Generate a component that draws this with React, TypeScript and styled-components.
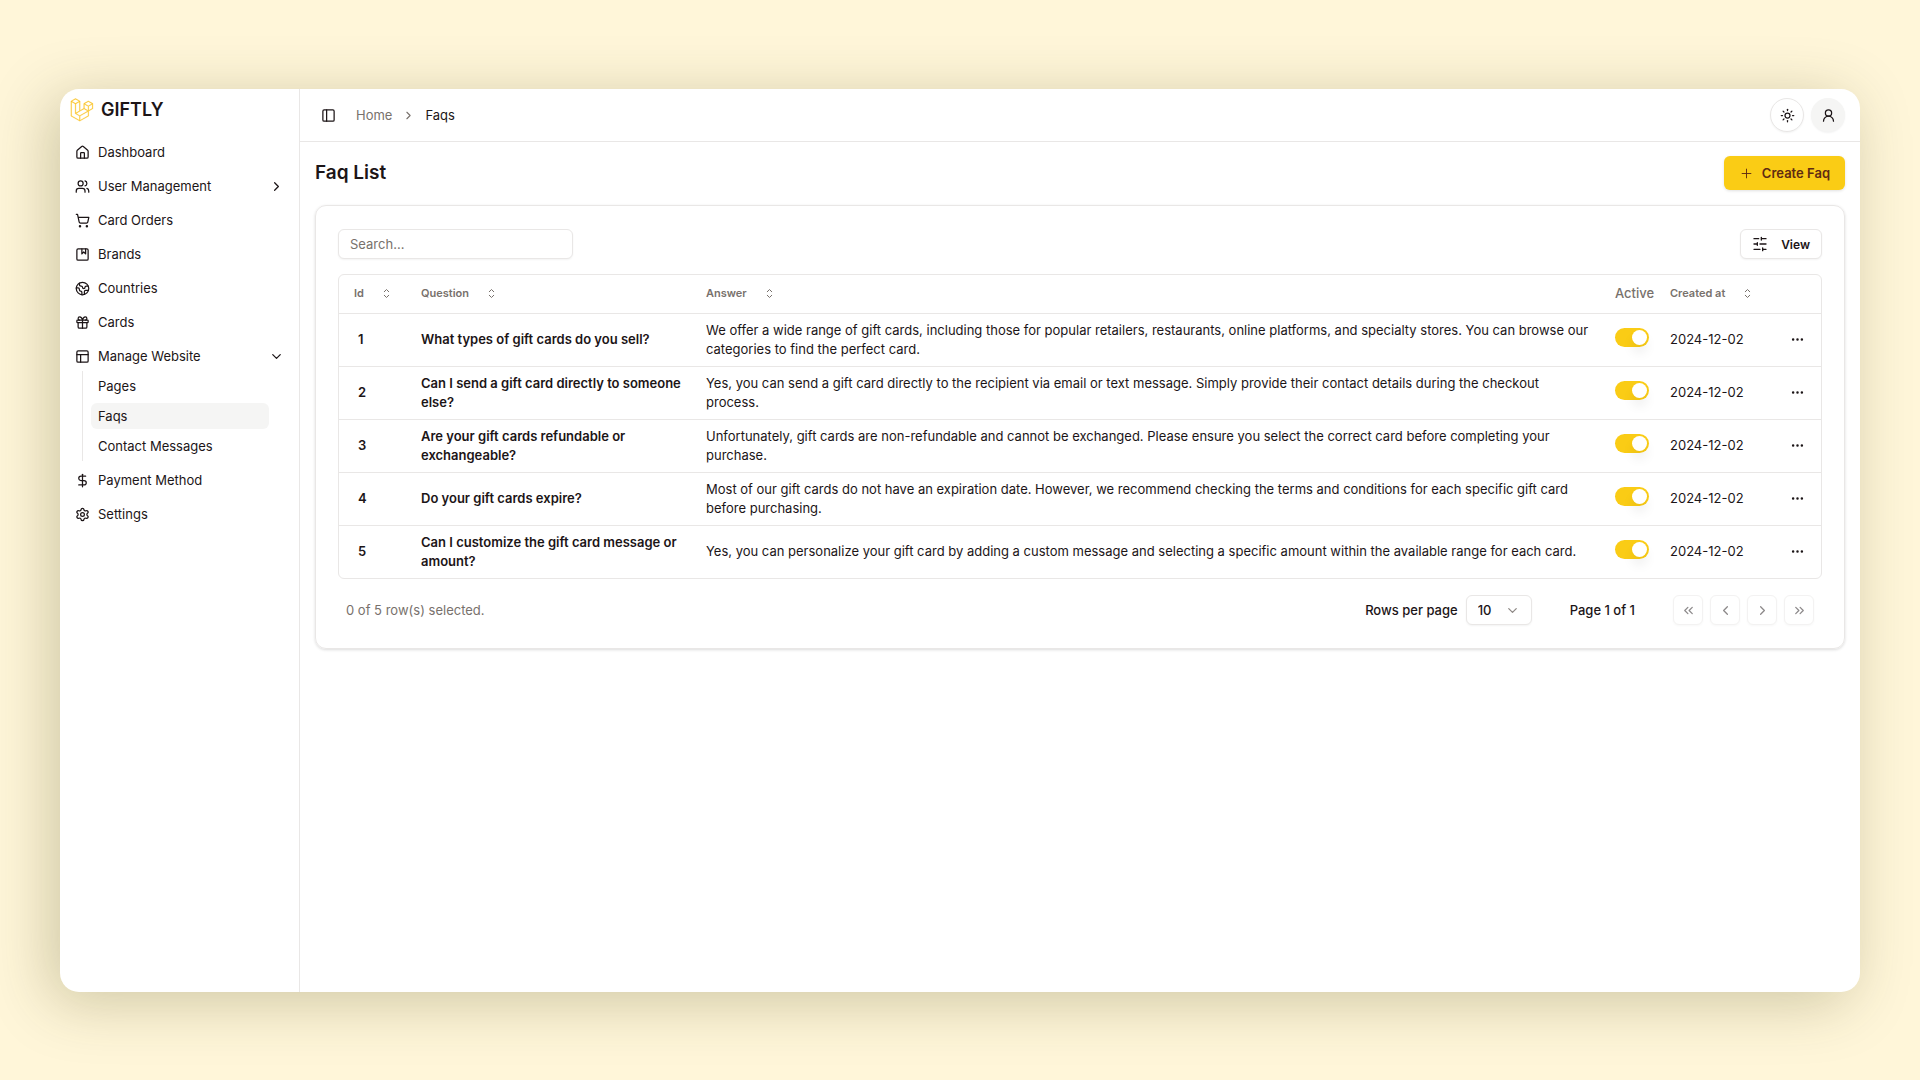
import React from "react";
import styled, { createGlobalStyle, css } from "styled-components";
import {
  Album,
  ChevronDown,
  ChevronLeft,
  ChevronRight,
  ChevronsLeft,
  ChevronsRight,
  DollarSign,
  Earth,
  Ellipsis,
  Gift,
  House,
  PanelLeft,
  PanelsTopLeft,
  Plus,
  Settings,
  ShoppingCart,
  Sun,
  UserRound,
  Users,
} from "lucide-react";

const ink = "#1c1517";
const muted = "#78716c";
const line = "#e9e7e6";
const yellow = "#facc15";

const GlobalStyle = createGlobalStyle`
  *, *::before, *::after { box-sizing: border-box; }
  body {
    margin: 0;
    background: #fff6d9;
    color: ${ink};
    font-family: Inter, "Liberation Sans", sans-serif;
    font-size: 13px;
    line-height: 19px;
  }
  button, input, select { font: inherit; color: inherit; }
  button { cursor: pointer; padding: 0; }
  a { color: inherit; text-decoration: none; }
  svg { flex: none; }
`;

const Stage = styled.div`
  display: flex;
  min-height: 100vh;
  padding: 89px 60px 88px;
`;

const Window = styled.div`
  display: flex;
  flex: 1;
  min-width: 0;
  background: #fff;
  border-radius: 19px;
  box-shadow: -10px 10px 60px rgba(59, 61, 7, 0.25);
`;

const Sidebar = styled.aside`
  flex: none;
  width: 240px;
  border-right: 1px solid ${line};
`;

const Brand = styled.a`
  display: flex;
  align-items: center;
  gap: 7px;
  height: 41px;
  padding-left: 10px;
  font-size: 18px;
  font-weight: 600;
`;

const Nav = styled.nav`
  padding: 7px 8px;
`;

const NavList = styled.ul`
  display: flex;
  flex-direction: column;
  gap: 4px;
  margin: 0;
  padding: 0;
  list-style: none;
`;

const itemStyle = css`
  display: flex;
  align-items: center;
  gap: 8px;
  width: 100%;
  height: 30px;
  padding: 0 7px;
  border: 0;
  border-radius: 6px;
  background: none;
  text-align: left;
`;

const NavLink = styled.a`
  ${itemStyle}
`;

const NavButton = styled.button`
  ${itemStyle}
  & > span { flex: 1; }
`;

const SubList = styled.ul`
  display: flex;
  flex-direction: column;
  gap: 4px;
  margin: 0 22px 0 14px;
  padding: 2px 0 2px 8px;
  border-left: 1px solid ${line};
  list-style: none;
`;

const SubLink = styled.a<{ $active?: boolean }>`
  display: flex;
  align-items: center;
  height: 26px;
  padding: 0 7px;
  border-radius: 6px;
  background: ${(p) => (p.$active ? "#f5f5f4" : "transparent")};
`;

const Main = styled.main`
  flex: 1;
  min-width: 0;
`;

const TopBar = styled.header`
  display: flex;
  align-items: center;
  justify-content: space-between;
  height: 53px;
  padding: 0 15px;
  border-bottom: 1px solid ${line};
`;

const Group = styled.div<{ $gap: number }>`
  display: flex;
  align-items: center;
  gap: ${(p) => p.$gap}px;
`;

const IconButton = styled.button`
  display: grid;
  place-items: center;
  width: 26px;
  height: 26px;
  border: 0;
  border-radius: 6px;
  background: none;
`;

const RoundButton = styled.button<{ $filled?: boolean }>`
  display: grid;
  place-items: center;
  width: 34px;
  height: 34px;
  border: 1px solid ${(p) => (p.$filled ? "#f5f5f4" : line)};
  border-radius: 50%;
  background: ${(p) => (p.$filled ? "#f5f5f4" : "#fff")};
  box-shadow: 0 1px 2px rgba(0, 0, 0, 0.05);
`;

const Crumbs = styled.nav`
  display: flex;
  align-items: center;
  gap: 10px;
  color: ${muted};
  & > span { color: ${ink}; }
`;

const Content = styled.div`
  padding: 14px 15px;
`;

const TitleRow = styled.div`
  display: flex;
  align-items: center;
  justify-content: space-between;
  margin-bottom: 15px;
`;

const Title = styled.h1`
  margin: 0;
  font-size: 19px;
  line-height: 26px;
  font-weight: 600;
`;

const CreateButton = styled.button`
  display: flex;
  align-items: center;
  gap: 8px;
  height: 34px;
  padding: 0 15px;
  border: 0;
  border-radius: 6px;
  background: ${yellow};
  color: #5f2b12;
  font-weight: 600;
  box-shadow: 0 1px 3px rgba(0, 0, 0, 0.12);
`;

const Card = styled.section`
  padding: 23px 22px;
  border: 1px solid ${line};
  border-radius: 11px;
  box-shadow: 0 1px 3px rgba(0, 0, 0, 0.14);
`;

const Toolbar = styled.div`
  display: flex;
  justify-content: space-between;
  margin-bottom: 15px;
`;

const fieldStyle = css`
  height: 30px;
  border: 1px solid ${line};
  border-radius: 6px;
  background: #fff;
  box-shadow: 0 1px 2px rgba(0, 0, 0, 0.05);
`;

const Search = styled.input`
  ${fieldStyle}
  width: 235px;
  padding: 0 11px;
  outline: 0;
  &::placeholder { color: ${muted}; opacity: 1; }
`;

const ViewButton = styled.button`
  ${fieldStyle}
  display: flex;
  align-items: center;
  gap: 13px;
  padding: 0 11px;
  font-size: 12px;
  font-weight: 600;
`;

const TableFrame = styled.div`
  border: 1px solid ${line};
  border-radius: 6px;
`;

const Table = styled.table`
  width: 100%;
  border-collapse: collapse;
  table-layout: fixed;
`;

const Col = styled.col<{ $width?: number }>`
  width: ${(p) => (p.$width ? `${p.$width}px` : "auto")};
`;

const HeadCell = styled.th<{ $first?: boolean }>`
  height: 38px;
  padding: 0 0 0 ${(p) => (p.$first ? 15 : 8)}px;
  color: ${muted};
  font-weight: 500;
  text-align: left;
`;

const SortButton = styled.button`
  display: flex;
  align-items: center;
  gap: 15px;
  border: 0;
  background: none;
  font-size: 11px;
  font-weight: 600;
`;

const Row = styled.tr`
  border-top: 1px solid ${line};
`;

const Cell = styled.td<{ $strong?: boolean; $first?: boolean; $wide?: boolean }>`
  height: 53px;
  padding: 7px ${(p) => (p.$wide ? 15 : 8)}px 7px ${(p) => (p.$first ? 19 : 8)}px;
  font-weight: ${(p) => (p.$strong ? 600 : 400)};
`;

const Switch = styled.input`
  appearance: none;
  display: block;
  width: 34px;
  height: 19px;
  margin: 0 0 4px;
  padding: 2px;
  border-radius: 10px;
  background: #e7e5e4;
  cursor: pointer;
  &::before {
    content: "";
    display: block;
    width: 15px;
    height: 15px;
    border-radius: 50%;
    background: #fff;
    box-shadow: 0 8px 12px rgba(0, 0, 0, 0.07);
  }
  &:checked { background: ${yellow}; }
  &:checked::before { margin-left: 15px; }
`;

const Footer = styled.div`
  display: flex;
  align-items: center;
  justify-content: space-between;
  margin-top: 16px;
  padding: 0 8px;
`;

const Selected = styled.span`
  color: ${muted};
`;

const Medium = styled.span`
  font-weight: 500;
`;

const PageSize = styled.label`
  display: flex;
  align-items: center;
  gap: 8px;
  font-weight: 500;
`;

const SelectBox = styled.span`
  ${fieldStyle}
  display: grid;
  align-items: center;
  width: 66px;
  & > * { grid-area: 1 / 1; }
  & > svg {
    justify-self: end;
    margin-right: 11px;
    color: #8d8885;
    pointer-events: none;
  }
`;

const Select = styled.select`
  appearance: none;
  width: 100%;
  height: 28px;
  padding: 0 11px;
  border: 0;
  background: none;
  outline: 0;
`;

const PageButton = styled.button`
  ${fieldStyle}
  display: grid;
  place-items: center;
  width: 30px;
  opacity: 0.5;
`;

const Logo = () => (
  <svg width="24" height="24" viewBox="-1 -1 52 54" fill="#fbc62f" stroke="#fbc62f" strokeWidth="0.6" aria-hidden="true">
    <path d="M49.626 11.564a.809.809 0 0 1 .028.209v10.972a.8.8 0 0 1-.402.694l-9.209 5.302V39.25c0 .286-.152.55-.4.694L20.42 51.01c-.044.025-.092.041-.14.058-.018.006-.035.017-.054.022a.805.805 0 0 1-.41 0c-.022-.006-.042-.018-.063-.026-.044-.016-.09-.03-.132-.054L.402 39.944A.801.801 0 0 1 0 39.25V6.334c0-.072.01-.142.028-.21.006-.023.02-.044.028-.067.015-.042.029-.085.051-.124.015-.026.037-.047.055-.071.023-.032.044-.065.071-.093.023-.023.053-.04.079-.06.029-.024.055-.05.088-.069h.001l9.61-5.533a.802.802 0 0 1 .8 0l9.61 5.533h.002c.032.02.059.045.088.068.026.02.055.038.078.06.028.029.048.062.072.094.017.024.04.045.054.071.023.04.036.082.052.124.008.023.022.044.028.068a.809.809 0 0 1 .028.209v20.559l8.008-4.611v-10.51c0-.07.01-.141.028-.208.007-.024.02-.045.028-.068.016-.042.03-.085.052-.124.015-.026.037-.047.054-.071.024-.032.044-.065.072-.093.023-.023.052-.04.078-.06.03-.024.056-.05.088-.069h.001l9.611-5.533a.801.801 0 0 1 .8 0l9.61 5.533c.034.02.06.045.09.068.025.02.054.038.077.06.028.029.048.062.072.094.018.024.04.045.054.071.023.039.036.082.052.124.009.023.022.044.028.068zm-1.574 10.718v-9.124l-3.363 1.936-4.646 2.675v9.124l8.01-4.611zm-9.61 16.505v-9.13l-4.57 2.61-13.05 7.448v9.216l17.62-10.144zM1.602 7.719v31.068L19.22 48.93v-9.214l-9.204-5.209-.003-.002-.004-.002c-.031-.018-.057-.044-.086-.066-.025-.02-.054-.036-.076-.058l-.002-.003c-.026-.025-.044-.056-.066-.084-.02-.027-.044-.05-.06-.078l-.001-.003c-.018-.03-.029-.066-.042-.1-.013-.03-.03-.058-.038-.09v-.001c-.01-.038-.012-.078-.016-.117-.004-.03-.012-.06-.012-.09v-.002-21.481L4.965 9.654 1.602 7.72zm8.81-5.994L2.405 6.334l8.005 4.609 8.006-4.61-8.006-4.608zm4.164 28.764l4.645-2.674V7.719l-3.363 1.936-4.646 2.675v20.096l3.364-1.937zM39.243 7.164l-8.006 4.609 8.006 4.609 8.005-4.61-8.005-4.608zm-.801 10.605l-4.646-2.675-3.363-1.936v9.124l4.645 2.674 3.364 1.937v-9.124zM20.02 38.33l11.743-6.704 5.87-3.35-8-4.606-9.211 5.303-8.395 4.833 7.993 4.524z" />
  </svg>
);

const SortIcon = () => (
  <svg width="15" height="15" viewBox="0 0 15 15" fill="none" stroke="currentColor" strokeLinecap="round" strokeLinejoin="round" aria-hidden="true">
    <path d="M5.25 5.75 7.5 3.5l2.25 2.25M5.25 9.25 7.5 11.5l2.25-2.25" />
  </svg>
);

const SlidersIcon = () => (
  <svg width="16" height="16" viewBox="0 0 24 24" fill="none" stroke="currentColor" strokeWidth="2" strokeLinecap="round" aria-hidden="true">
    <path d="M21 4h-7M10 4H3M21 12h-9M8 12H3M21 20h-5M12 20H3M14 2v4M8 10v4M16 18v4" />
  </svg>
);

const topItems = [
  { label: "Dashboard", icon: House },
  { label: "User Management", icon: Users, expandable: true },
  { label: "Card Orders", icon: ShoppingCart },
  { label: "Brands", icon: Album },
  { label: "Countries", icon: Earth },
  { label: "Cards", icon: Gift },
];

const bottomItems = [
  { label: "Payment Method", icon: DollarSign },
  { label: "Settings", icon: Settings },
];

const faqs = [
  {
    question: "What types of gift cards do you sell?",
    answer:
      "We offer a wide range of gift cards, including those for popular retailers, restaurants, online platforms, and specialty stores. You can browse our categories to find the perfect card.",
  },
  {
    question: "Can I send a gift card directly to someone else?",
    answer:
      "Yes, you can send a gift card directly to the recipient via email or text message. Simply provide their contact details during the checkout process.",
  },
  {
    question: "Are your gift cards refundable or exchangeable?",
    answer:
      "Unfortunately, gift cards are non-refundable and cannot be exchanged. Please ensure you select the correct card before completing your purchase.",
  },
  {
    question: "Do your gift cards expire?",
    answer:
      "Most of our gift cards do not have an expiration date. However, we recommend checking the terms and conditions for each specific gift card before purchasing.",
  },
  {
    question: "Can I customize the gift card message or amount?",
    answer:
      "Yes, you can personalize your gift card by adding a custom message and selecting a specific amount within the available range for each card.",
  },
];

const SortHeader = ({ label }: { label: string }) => (
  <SortButton>
    {label}
    <SortIcon />
  </SortButton>
);

export default function App() {
  return (
    <>
      <GlobalStyle />
      <Stage>
        <Window>
          <Sidebar>
            <Brand href="#">
              <Logo />
              GIFTLY
            </Brand>
            <Nav aria-label="Main">
              <NavList>
                {topItems.map(({ label, icon: Icon, expandable }) => (
                  <li key={label}>
                    {expandable ? (
                      <NavButton aria-expanded="false">
                        <Icon size={15} />
                        <span>{label}</span>
                        <ChevronRight size={15} />
                      </NavButton>
                    ) : (
                      <NavLink href="#">
                        <Icon size={15} />
                        {label}
                      </NavLink>
                    )}
                  </li>
                ))}
                <li>
                  <NavButton aria-expanded="true">
                    <PanelsTopLeft size={15} />
                    <span>Manage Website</span>
                    <ChevronDown size={15} />
                  </NavButton>
                  <SubList>
                    <li><SubLink href="#">Pages</SubLink></li>
                    <li><SubLink href="#" $active aria-current="page">Faqs</SubLink></li>
                    <li><SubLink href="#">Contact Messages</SubLink></li>
                  </SubList>
                </li>
                {bottomItems.map(({ label, icon: Icon }) => (
                  <li key={label}>
                    <NavLink href="#">
                      <Icon size={15} />
                      {label}
                    </NavLink>
                  </li>
                ))}
              </NavList>
            </Nav>
          </Sidebar>
          <Main>
            <TopBar>
              <Group $gap={15}>
                <IconButton aria-label="Toggle sidebar">
                  <PanelLeft size={15} />
                </IconButton>
                <Crumbs aria-label="Breadcrumb">
                  <a href="#">Home</a>
                  <ChevronRight size={13} />
                  <span>Faqs</span>
                </Crumbs>
              </Group>
              <Group $gap={7}>
                <RoundButton aria-label="Theme">
                  <Sun size={15} />
                </RoundButton>
                <RoundButton $filled aria-label="Account">
                  <UserRound size={15} />
                </RoundButton>
              </Group>
            </TopBar>
            <Content>
              <TitleRow>
                <Title>Faq List</Title>
                <CreateButton>
                  <Plus size={15} strokeWidth={1.5} />
                  Create Faq
                </CreateButton>
              </TitleRow>
              <Card>
                <Toolbar>
                  <Search type="text" placeholder="Search..." aria-label="Search" />
                  <ViewButton>
                    <SlidersIcon />
                    View
                  </ViewButton>
                </Toolbar>
                <TableFrame>
                  <Table>
                    <colgroup>
                      <Col $width={74} />
                      <Col $width={285} />
                      <Col />
                      <Col $width={55} />
                      <Col $width={114} />
                      <Col $width={45} />
                    </colgroup>
                    <thead>
                      <tr>
                        <HeadCell $first><SortHeader label="Id" /></HeadCell>
                        <HeadCell><SortHeader label="Question" /></HeadCell>
                        <HeadCell><SortHeader label="Answer" /></HeadCell>
                        <HeadCell>Active</HeadCell>
                        <HeadCell><SortHeader label="Created at" /></HeadCell>
                        <HeadCell aria-label="Actions" />
                      </tr>
                    </thead>
                    <tbody>
                      {faqs.map(({ question, answer }, i) => (
                        <Row key={question}>
                          <Cell $first $strong>{i + 1}</Cell>
                          <Cell $strong>{question}</Cell>
                          <Cell $wide>{answer}</Cell>
                          <Cell>
                            <Switch type="checkbox" role="switch" defaultChecked aria-label={`Active: ${question}`} />
                          </Cell>
                          <Cell>2024-12-02</Cell>
                          <Cell>
                            <IconButton aria-label="Row actions">
                              <Ellipsis size={15} />
                            </IconButton>
                          </Cell>
                        </Row>
                      ))}
                    </tbody>
                  </Table>
                </TableFrame>
                <Footer>
                  <Selected>0 of 5 row(s) selected.</Selected>
                  <Group $gap={38}>
                    <PageSize>
                      Rows per page
                      <SelectBox>
                        <Select defaultValue="10">
                          <option>10</option>
                          <option>20</option>
                          <option>50</option>
                        </Select>
                        <ChevronDown size={15} />
                      </SelectBox>
                    </PageSize>
                    <Medium>Page 1 of 1</Medium>
                    <Group $gap={7}>
                      <PageButton disabled aria-label="First page"><ChevronsLeft size={15} /></PageButton>
                      <PageButton disabled aria-label="Previous page"><ChevronLeft size={15} /></PageButton>
                      <PageButton disabled aria-label="Next page"><ChevronRight size={15} /></PageButton>
                      <PageButton disabled aria-label="Last page"><ChevronsRight size={15} /></PageButton>
                    </Group>
                  </Group>
                </Footer>
              </Card>
            </Content>
          </Main>
        </Window>
      </Stage>
    </>
  );
}
